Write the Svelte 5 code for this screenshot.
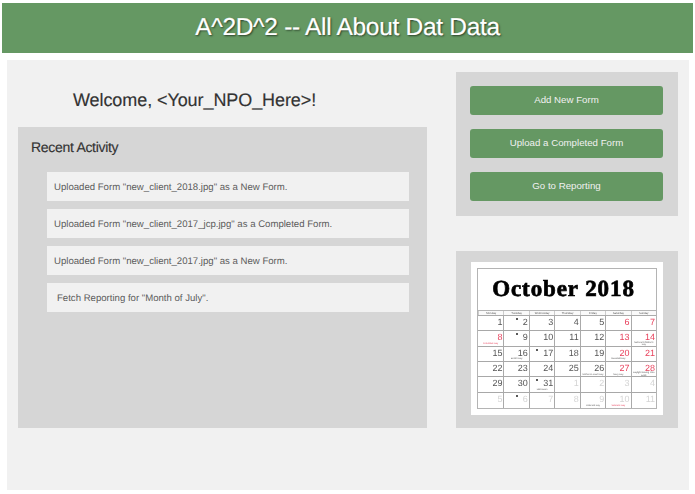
<script>
  const activity = [
    { text: 'Uploaded Form "new_client_2018.jpg" as a New Form.' },
    { text: 'Uploaded Form "new_client_2017_jcp.jpg" as a Completed Form.' },
    { text: 'Uploaded Form "new_client_2017.jpg" as a New Form.' },
    { text: 'Fetch Reporting for "Month of July".', inset: true }
  ];
  const actions = ['Add New Form', 'Upload a Completed Form', 'Go to Reporting'];
  const weekdays = ['Monday', 'Tuesday', 'Wednesday', 'Thursday', 'Friday', 'Saturday', 'Sunday'];
  const notes = {
    8: 'Columbus Day',
    14: "National Children's Day",
    16: "Boss's Day",
    20: 'Sweetest Day',
    26: "Mother-in-Law's Day",
    27: 'Navy Day',
    28: 'Daylight Saving Time Ends',
    31: 'Halloween',
    40: 'Veterans Day',
    41: 'Veterans Day'
  };
  const dots = [2, 9, 17, 31, 37];
  const days = Array.from({ length: 42 }, (_, i) => {
    const serial = i + 1;
    const out = serial > 31;
    return {
      serial,
      label: out ? serial - 31 : serial,
      out,
      red: !out && i % 7 >= 5 || serial === 8,
      redNote: serial === 8 || serial === 41,
      note: notes[serial],
      dot: dots.includes(serial)
    };
  });
</script>

<header class="banner"><h1>A^2D^2 -- All About Dat Data</h1></header>

<main class="page">
  <section class="left">
    <h2 class="welcome">Welcome, &lt;Your_NPO_Here&gt;!</h2>
    <div class="recent">
      <h3>Recent Activity</h3>
      <ul>
        {#each activity as item}
          <li class:inset={item.inset}>{item.text}</li>
        {/each}
      </ul>
    </div>
  </section>

  <aside class="right">
    <div class="panel actions">
      {#each actions as action}
        <button type="button">{action}</button>
      {/each}
    </div>
    <div class="panel calendar-panel">
      <div class="sheet">
        <div class="calendar">
          <div class="month">October 2018</div>
          <div class="weekdays">
            {#each weekdays as day}<span>{day}</span>{/each}
          </div>
          <div class="weeks">
            {#each days as d}
              <div class="cell">
                <div class="num" class:red={d.red} class:out={d.out}>
                  {#if d.dot}<i class="dot"></i>{/if}{d.label}
                </div>
                {#if d.note}<div class="note" class:note-red={d.redNote}>{d.note}</div>{/if}
              </div>
            {/each}
          </div>
        </div>
      </div>
    </div>
  </aside>
</main>

<style>
  :global(body) {
    margin: 0;
    background: #fff;
    font-family: "Liberation Sans", Arial, sans-serif;
    text-rendering: geometricPrecision;
  }
  .banner {
    margin: 3px 2px 0;
    height: 50px;
    box-sizing: border-box;
    background: #659863;
    display: flex;
    align-items: center;
    justify-content: center;
  }
  h1 {
    margin: 0;
    color: #fff;
    font-size: 24.5px;
    font-weight: 400;
    letter-spacing: -0.3px;
    text-shadow: 1px 1px 2px rgba(0, 0, 0, 0.6);
    -webkit-text-stroke: 0.2px #fff;
  }
  .page {
    margin: 7px 6px 0 7px;
    height: 430px;
    box-sizing: border-box;
    background: #f1f1f1;
    padding: 12px 11px 0;
    display: flex;
    justify-content: space-between;
  }
  .left {
    width: 409px;
    display: flex;
    flex-direction: column;
  }
  .welcome {
    margin: 0;
    height: 55px;
    box-sizing: border-box;
    padding: 16px 0 0 55px;
    font-size: 18px;
    line-height: 24px;
    font-weight: 400;
    letter-spacing: -0.08px;
    color: #333;
    white-space: nowrap;
    -webkit-text-stroke: 0.15px #333;
  }
  .recent {
    height: 301px;
    box-sizing: border-box;
    background: #d6d6d6;
    padding: 10px 18px 0 13px;
  }
  h3 {
    margin: 0;
    font-size: 14px;
    line-height: 20px;
    font-weight: 400;
    letter-spacing: -0.3px;
    color: #333;
    -webkit-text-stroke: 0.15px #333;
  }
  ul {
    list-style: none;
    margin: 15px 0 0 16px;
    padding: 0;
    display: flex;
    flex-direction: column;
    gap: 8px;
  }
  li {
    height: 29px;
    box-sizing: border-box;
    padding: 1px 0 0 7px;
    background: #f1f1f1;
    font-size: 9.6px;
    line-height: 29px;
    color: #5c5c5c;
  }
  li.inset { padding-left: 10px; }
  .right {
    width: 222px;
    display: flex;
    flex-direction: column;
    gap: 35px;
  }
  .panel { background: #d6d6d6; }
  .actions {
    height: 144px;
    box-sizing: border-box;
    padding: 14px 15px 0 14px;
    display: flex;
    flex-direction: column;
    gap: 14px;
  }
  button {
    height: 29px;
    padding: 0 0 3px;
    border: 0;
    border-radius: 3px;
    background: #659863;
    color: #f1f1f1;
    font: 400 9.7px "Liberation Sans", Arial, sans-serif;
  }
  .calendar-panel {
    height: 177px;
    box-sizing: border-box;
    padding: 11px 15px 0;
  }
  .sheet {
    height: 153px;
    box-sizing: border-box;
    background: #fff;
    padding: 6px;
    filter: blur(0.35px);
  }
  .calendar {
    height: 141px;
    border: 1px solid #b4b4b4;
    box-sizing: border-box;
    display: flex;
    flex-direction: column;
  }
  .month {
    height: 41px;
    flex: none;
    box-sizing: border-box;
    padding: 8px 7px 0 0;
    text-align: center;
    font-family: "Liberation Serif", serif;
    font-weight: 700;
    font-size: 23px;
    line-height: 24px;
    letter-spacing: 0.9px;
    color: #000;
    -webkit-text-stroke: 0.7px #000;
  }
  .weekdays {
    height: 4px;
    flex: none;
    display: grid;
    grid-template-columns: repeat(7, minmax(0, 1fr));
    border-top: 1px solid #b4b4b4;
    background: #fafafa;
  }
  .weekdays span {
    font-size: 2.8px;
    line-height: 4px;
    text-align: center;
    color: #555;
    border-left: 1px solid #ccc;
    overflow: hidden;
    white-space: nowrap;
  }
  .weeks {
    flex: 1;
    min-height: 0;
    display: grid;
    grid-template-columns: repeat(7, minmax(0, 1fr));
    grid-template-rows: repeat(6, minmax(0, 1fr));
    border-top: 1px solid #aaa;
  }
  .cell {
    border-left: 1px solid #aaa;
    border-bottom: 1px solid #a8a8a8;
    padding: 1px 1px 0.5px;
    min-width: 0;
    min-height: 0;
    display: flex;
    flex-direction: column;
  }
  .cell:nth-child(7n + 1) { border-left: 0; }
  .cell:nth-last-child(-n + 7) { border-bottom: 0; }
  .num {
    height: 9.5px;
    flex: none;
    font-size: 9px;
    line-height: 10px;
    text-align: right;
    color: #555;
  }
  .num.red { color: #e8415c; }
  .num.out { color: #d4d4d4; }
  .dot {
    display: inline-block;
    width: 2px;
    height: 2px;
    margin-right: 5px;
    border-radius: 50%;
    background: #222;
    vertical-align: 5px;
  }
  .note {
    margin-top: auto;
    font-size: 2.3px;
    line-height: 2.3px;
    text-align: center;
    color: #555;
  }
  .note-red { color: #e8415c; }
</style>
